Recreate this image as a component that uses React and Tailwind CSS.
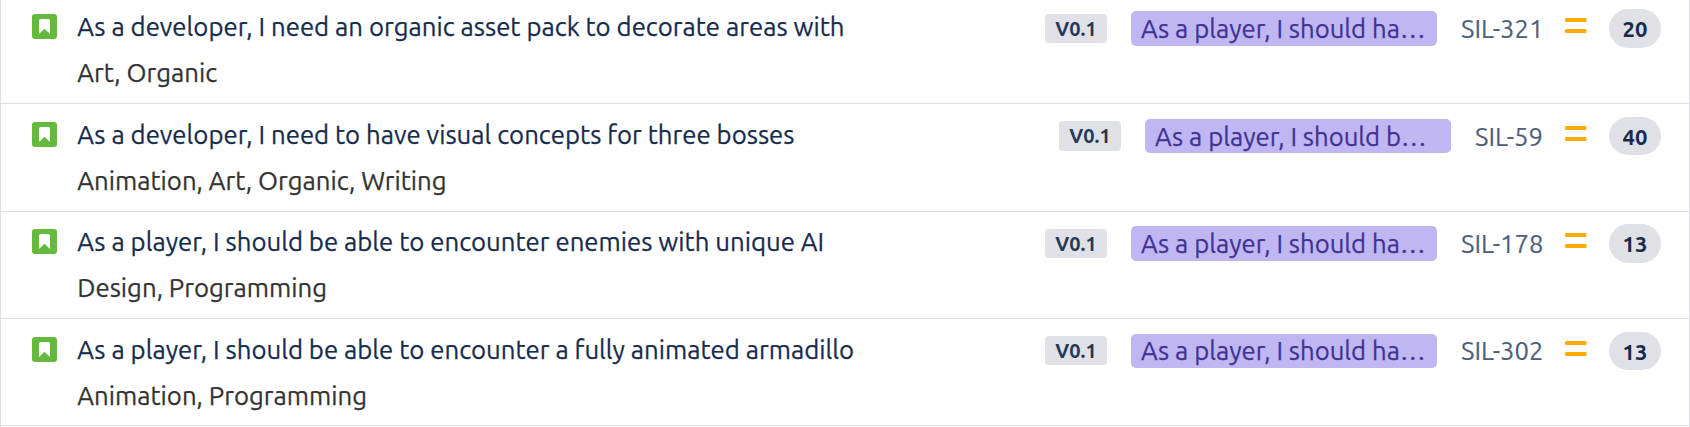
const issues = [
  {
    title: "As a developer, I need an organic asset pack to decorate areas with",
    labels: "Art, Organic",
    epic: "As a player, I should ha…",
    epicHeight: "h-[35px] leading-[35px]",
    badge: "mt-[18px] h-[29px]",
    id: "SIL-321",
    idBox: "w-[82px] leading-[35px]",
    points: 20,
    pointsHeight: "h-[39px]",
    row: "h-[108px] -mt-1",
  },
  {
    title: "As a developer, I need to have visual concepts for three bosses",
    labels: "Animation, Art, Organic, Writing",
    epic: "As a player, I should b…",
    epicHeight: "h-[34px] leading-[35px]",
    badge: "mt-[17px] h-[30px]",
    id: "SIL-59",
    idBox: "w-[68px] leading-[35px]",
    points: 40,
    pointsHeight: "h-[38px]",
    row: "h-[108px]",
  },
  {
    title: "As a player, I should be able to encounter enemies with unique AI",
    labels: "Design, Programming",
    epic: "As a player, I should ha…",
    epicHeight: "h-[35px] leading-[35px]",
    badge: "mt-[18px] h-[29px]",
    id: "SIL-178",
    idBox: "w-[82px] leading-[35px]",
    points: 13,
    pointsHeight: "h-[39px]",
    row: "h-[108px] -mt-px",
  },
  {
    title: "As a player, I should be able to encounter a fully animated armadillo",
    labels: "Animation, Programming",
    epic: "As a player, I should ha…",
    epicHeight: "h-[34px] leading-[33px]",
    badge: "mt-[17px] h-[29px]",
    id: "SIL-302",
    idBox: "w-[82px] leading-[33px]",
    points: 13,
    pointsHeight: "h-[38px]",
    row: "h-[107px]",
  },
];

function StoryIcon() {
  return (
    <svg className="mt-[18px] h-[25px] w-[25px] shrink-0" viewBox="0 0 25 25" aria-hidden="true">
      <rect width="25" height="25" rx="3" fill="#63ba3c" />
      <path d="M7 20V6.5Q7 5 8.5 5H16.5Q18 5 18 6.5V20L12.5 14.8Z" fill="#fff" />
    </svg>
  );
}

function PriorityIcon() {
  return (
    <svg className="mt-[22px] ml-[22px] h-[16px] w-[22px] shrink-0" viewBox="0 0 22 16" aria-hidden="true">
      <rect y="0.1" width="21.5" height="4" rx="1.3" fill="#ffab00" />
      <rect y="11" width="21.5" height="4" rx="1.3" fill="#ffab00" />
    </svg>
  );
}

function IssueRow({ issue }) {
  return (
    <div className={`flex items-start border-b border-[#dfe0e5] pr-[28px] pl-[31px] ${issue.row}`}>
      <StoryIcon />
      <div className="ml-[20.3px] flex flex-1 flex-col pt-[8px] text-[25.76px] leading-[46px] whitespace-nowrap [-webkit-text-stroke:0.25px]">
        <span className="text-[#172b4d]">{issue.title}</span>
        <span className="text-[#333333]">{issue.labels}</span>
      </div>
      <div className={`flex w-[62px] shrink-0 items-center justify-center rounded-[4px] bg-[#dfe1e6] text-[20px] font-bold text-[#253858] ${issue.badge}`}>
        V0.1
      </div>
      <div className={`mt-[15px] ml-[24px] w-[306px] shrink-0 rounded-[5px] bg-[#c0b6f2] pl-[10px] text-[25.7px] whitespace-nowrap text-[#403294] [-webkit-text-stroke:0.25px] ${issue.epicHeight}`}>
        {issue.epic}
      </div>
      <div className={`mt-[15px] ml-[24px] shrink-0 text-[25.6px] whitespace-nowrap text-[#505f79] [-webkit-text-stroke:0.2px] ${issue.idBox}`}>
        {issue.id}
      </div>
      <PriorityIcon />
      <div className={`mt-[13px] ml-[22px] flex w-[52px] shrink-0 items-center justify-center rounded-full bg-[#dfe1e6] text-[22px] font-bold text-[#172b4d] ${issue.pointsHeight}`}>
        {issue.points}
      </div>
    </div>
  );
}

export default function App() {
  return (
    <div className="h-[427px] w-[1690px] overflow-hidden border-x border-[#dfe0e5] bg-white font-['Ubuntu','Noto_Sans',sans-serif]">
      <div className="flow-root">
        {issues.map((issue) => (
          <IssueRow key={issue.id} issue={issue} />
        ))}
      </div>
    </div>
  );
}
